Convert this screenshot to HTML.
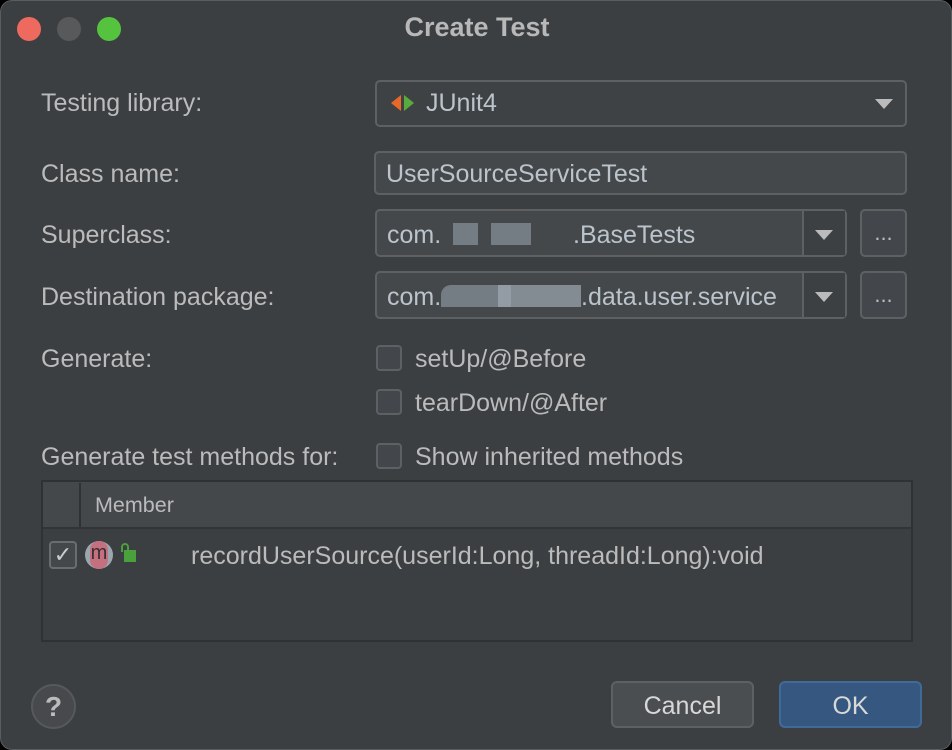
<!DOCTYPE html>
<html><head><style>
*{margin:0;padding:0;box-sizing:border-box}
body{width:952px;height:750px;background:#000;font-family:"Liberation Sans",Arial,sans-serif;overflow:hidden;position:relative}
.win{position:absolute;left:0;top:0;width:952px;height:750px;background:#3c3f42;border-radius:12px;border:1px solid #5a5d60}
.a{position:absolute}
.lbl{position:absolute;left:40px;color:#bbbbbb;font-size:25px}
.fld{position:absolute;border:2px solid #5e6164;border-radius:5px;background:#45484a}
.txt{position:absolute;color:#bbc4cc;font-size:25px}
.dot{position:absolute;width:24px;height:24px;border-radius:50%;top:16px}
.cb{position:absolute;left:375px;width:26px;height:26px;border:2px solid #5e6164;border-radius:4px;background:#43464a}
.arrow{position:absolute;width:0;height:0;border-left:9px solid transparent;border-right:9px solid transparent;border-top:10px solid #bbbbbb}
.btn{position:absolute;top:680px;height:47px;width:143px;border-radius:6px;color:#d8d8d8;font-size:25px;text-align:center;line-height:46px}
.blur{position:absolute;background:#8a949c;opacity:.7}
</style></head><body>
<div class="win">
<div class="dot" style="left:16px;background:#ee6a5e"></div>
<div class="dot" style="left:56px;background:#58595b"></div>
<div class="dot" style="left:96px;background:#56c33f"></div>
<div class="a" style="left:0;width:952px;top:11px;text-align:center;color:#b8b8b8;font-size:27px;font-weight:bold">Create Test</div>

<div class="lbl" style="top:88px">Testing library:</div>
<div class="fld" style="left:374px;top:79px;width:532px;height:47px;background:#3f4245"></div>
<div class="a" style="left:390px;top:94px;width:0;height:0;border-top:8px solid transparent;border-bottom:8px solid transparent;border-right:10px solid #e8682a"></div>
<div class="a" style="left:403px;top:94px;width:0;height:0;border-top:8px solid transparent;border-bottom:8px solid transparent;border-left:10px solid #5aab3e"></div>
<div class="txt" style="left:425px;top:88px">JUnit4</div>
<div class="arrow" style="left:874px;top:98px"></div>

<div class="lbl" style="top:159px">Class name:</div>
<div class="fld" style="left:373px;top:150px;width:533px;height:44px"></div>
<div class="txt" style="left:385px;top:159px">UserSourceServiceTest</div>

<div class="lbl" style="top:220px">Superclass:</div>
<div class="fld" style="left:374px;top:208px;width:472px;height:48px"></div>
<div class="a" style="left:801px;top:210px;width:2px;height:44px;background:#5e6164"></div>
<div class="a" style="left:803px;top:210px;width:41px;height:44px;background:#3d4043"></div>
<div class="arrow" style="left:814px;top:229px"></div>
<div class="txt" style="left:386px;top:220px">com.</div>
<div class="blur" style="left:452px;top:222px;width:25px;height:22px"></div>
<div class="blur" style="left:490px;top:222px;width:40px;height:22px"></div>
<div class="txt" style="left:572px;top:220px">.BaseTests</div>
<div class="fld" style="left:859px;top:208px;width:47px;height:48px;background:#43464a"></div>
<div class="a" style="left:859px;top:219px;width:47px;text-align:center;color:#bbb;font-size:22px">...</div>

<div class="lbl" style="top:282px">Destination package:</div>
<div class="fld" style="left:374px;top:270px;width:472px;height:48px"></div>
<div class="a" style="left:801px;top:272px;width:2px;height:44px;background:#5e6164"></div>
<div class="a" style="left:803px;top:272px;width:41px;height:44px;background:#3d4043"></div>
<div class="arrow" style="left:814px;top:291px"></div>
<div class="txt" style="left:386px;top:282px">com.</div>
<div class="blur" style="left:440px;top:284px;width:70px;height:22px;border-radius:10px 0 0 0"></div>
<div class="blur" style="left:497px;top:284px;width:83px;height:22px;background:#a0aab2"></div>
<div class="txt" style="left:580px;top:282px">.data.user.service</div>
<div class="fld" style="left:859px;top:270px;width:47px;height:48px;background:#43464a"></div>
<div class="a" style="left:859px;top:281px;width:47px;text-align:center;color:#bbb;font-size:22px">...</div>

<div class="lbl" style="top:344px">Generate:</div>
<div class="cb" style="top:344px"></div>
<div class="txt" style="left:414px;top:344px;color:#bbbbbb">setUp/@Before</div>
<div class="cb" style="top:388px"></div>
<div class="txt" style="left:414px;top:388px;color:#bbbbbb">tearDown/@After</div>

<div class="lbl" style="top:442px">Generate test methods for:</div>
<div class="cb" style="top:442px"></div>
<div class="txt" style="left:414px;top:442px;color:#bbbbbb">Show inherited methods</div>

<div class="a" style="left:40px;top:479px;width:872px;height:162px;border:2px solid #2f3133;background:#3c3f42"></div>
<div class="a" style="left:42px;top:481px;width:868px;height:47px;background:#45484b;border-bottom:2px solid #323436"></div>
<div class="a" style="left:78px;top:482px;width:2px;height:44px;background:#2f3133"></div>
<div class="a" style="left:94px;top:492px;color:#bbbbbb;font-size:21.5px">Member</div>
<div class="a" style="left:48px;top:540px;width:28px;height:28px;border:2px solid #6a6d70;border-radius:4px;background:#45484a;color:#ccc;font-size:22px;line-height:24px;text-align:center">✓</div>
<div class="a" style="left:84px;top:540px;width:28px;height:28px;border-radius:50%;background:#9aa6b0"></div>
<div class="a" style="left:89px;top:540px;width:18px;height:28px;border-radius:9px;background:#c4707e;color:#3a2d33;font-size:20px;text-align:center;line-height:24px">m</div>
<div class="a" style="left:123px;top:549px;width:12px;height:12px;background:#4aa03a"></div>
<div class="a" style="left:120px;top:542px;width:8px;height:9px;border:2px solid #4aa03a;border-bottom:none;border-radius:4px 4px 0 0"></div>
<div class="a" style="left:190px;top:541px;color:#bbbbbb;font-size:25px">recordUserSource(userId:Long, threadId:Long):void</div>

<div class="a" style="left:30px;top:683px;width:45px;height:45px;border-radius:50%;border:2px solid #56595c;background:#47494c;color:#bbb;font-size:28px;font-weight:bold;text-align:center;line-height:41px">?</div>
<div class="btn" style="left:610px;background:#4b4e51;border:2px solid #5e6164">Cancel</div>
<div class="btn" style="left:778px;background:#365880;border:2px solid #3f6a9a">OK</div>
</div>
</body></html>
